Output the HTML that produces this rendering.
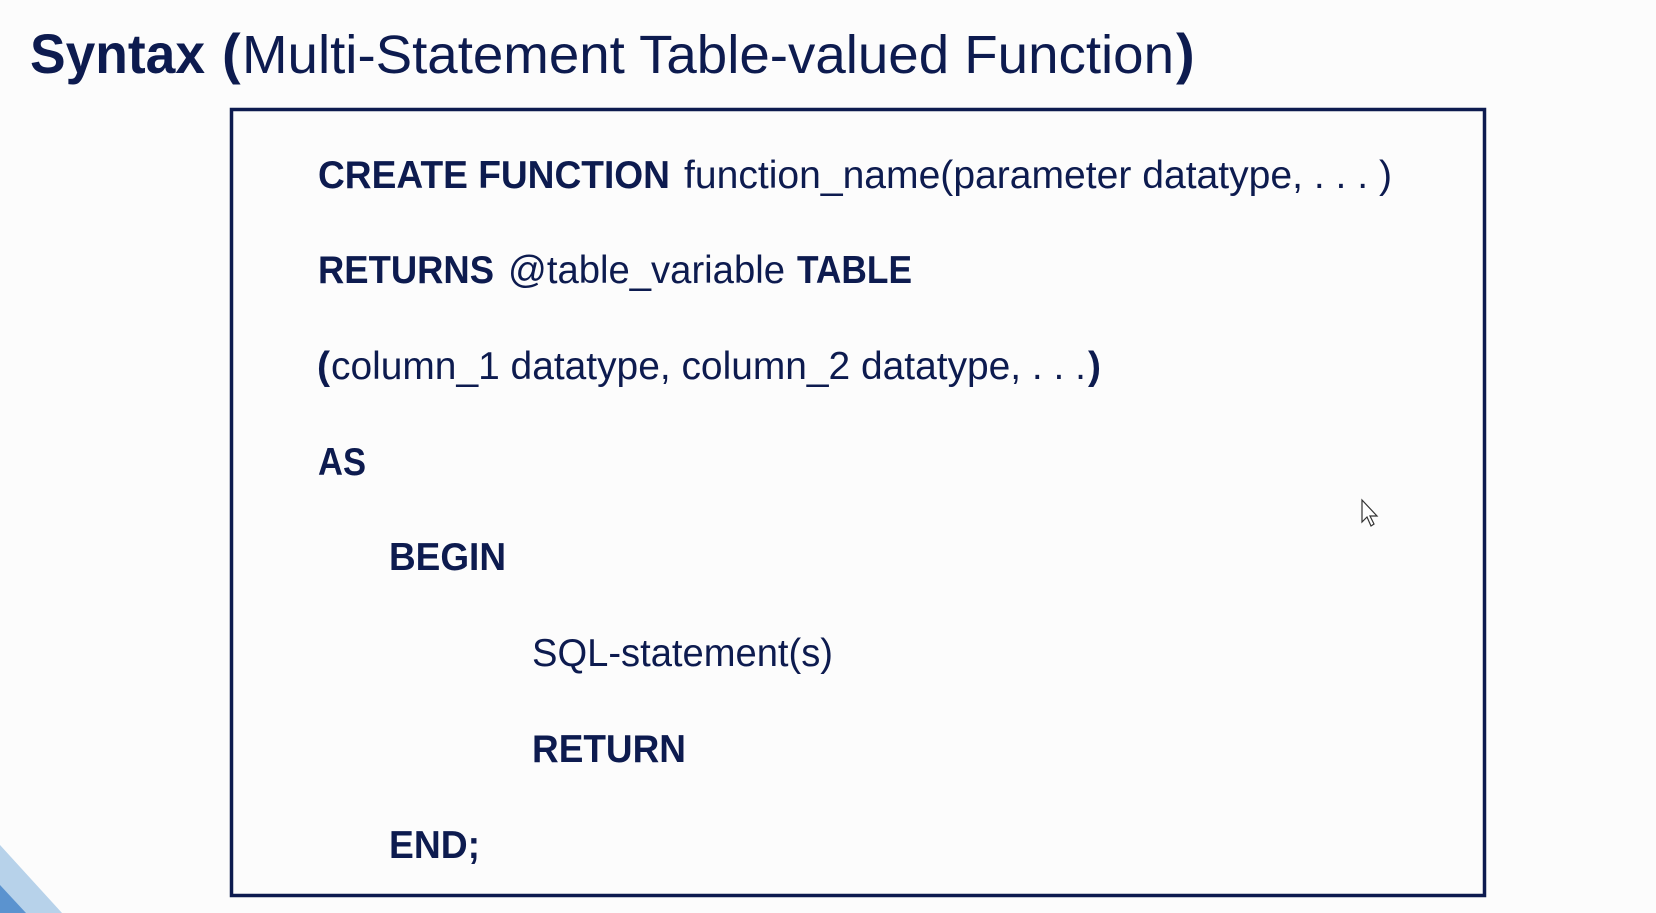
<!DOCTYPE html>
<html><head><meta charset="utf-8"><style>
html,body{margin:0;padding:0;background:#fcfcfc;}
svg{display:block}
</style></head><body>
<svg width="1656" height="913" viewBox="0 0 1656 913" xmlns="http://www.w3.org/2000/svg">
<rect width="1656" height="913" fill="#fcfcfc"/>
<polygon points="0,845 0,913 62,913" fill="#b7d2ea"/>
<polygon points="0,885 0,913 26,913" fill="#5b93cf"/>
<g fill="#0d1b4f" font-family="Liberation Sans, sans-serif">
<text x="30" y="73" font-size="56" font-weight="bold" textLength="175" lengthAdjust="spacingAndGlyphs">Syntax</text>
<text x="222" y="73" font-size="56" font-weight="bold">(</text>
<text x="242" y="73" font-size="54" textLength="932" lengthAdjust="spacingAndGlyphs">Multi-Statement Table-valued Function</text>
<text x="1176" y="73" font-size="56" font-weight="bold">)</text>

<text x="318" y="188" font-size="39" font-weight="bold" textLength="352" lengthAdjust="spacingAndGlyphs">CREATE FUNCTION</text>
<text x="684" y="188" font-size="39" textLength="708" lengthAdjust="spacingAndGlyphs">function_name(parameter datatype, . . . )</text>

<text x="318" y="283" font-size="39" font-weight="bold" textLength="176" lengthAdjust="spacingAndGlyphs">RETURNS</text>
<text x="508" y="283" font-size="39" textLength="277" lengthAdjust="spacingAndGlyphs">@table_variable</text>
<text x="797" y="283" font-size="39" font-weight="bold" textLength="115" lengthAdjust="spacingAndGlyphs">TABLE</text>

<text x="317" y="379" font-size="39" font-weight="bold">(</text>
<text x="331" y="379" font-size="39" textLength="755" lengthAdjust="spacingAndGlyphs">column_1 datatype, column_2 datatype, . . .</text>
<text x="1088" y="379" font-size="39" font-weight="bold">)</text>

<text x="318" y="475" font-size="39" font-weight="bold" textLength="48" lengthAdjust="spacingAndGlyphs">AS</text>
<text x="389" y="570" font-size="39" font-weight="bold" textLength="117" lengthAdjust="spacingAndGlyphs">BEGIN</text>
<text x="532" y="666" font-size="39" textLength="301" lengthAdjust="spacingAndGlyphs">SQL-statement(s)</text>
<text x="532" y="762" font-size="39" font-weight="bold" textLength="154" lengthAdjust="spacingAndGlyphs">RETURN</text>
<text x="389" y="858" font-size="39" font-weight="bold" textLength="91" lengthAdjust="spacingAndGlyphs">END;</text>
</g>
<rect x="231.5" y="109.5" width="1253" height="786" fill="none" stroke="#0d1b4f" stroke-width="3.5"/>
<path d="M1362 500 L1362 522 L1367 517 L1371 526 L1374 524 L1370 516 L1377 516 Z" fill="#fff" stroke="#333" stroke-width="1.2"/>
</svg>
</body></html>
